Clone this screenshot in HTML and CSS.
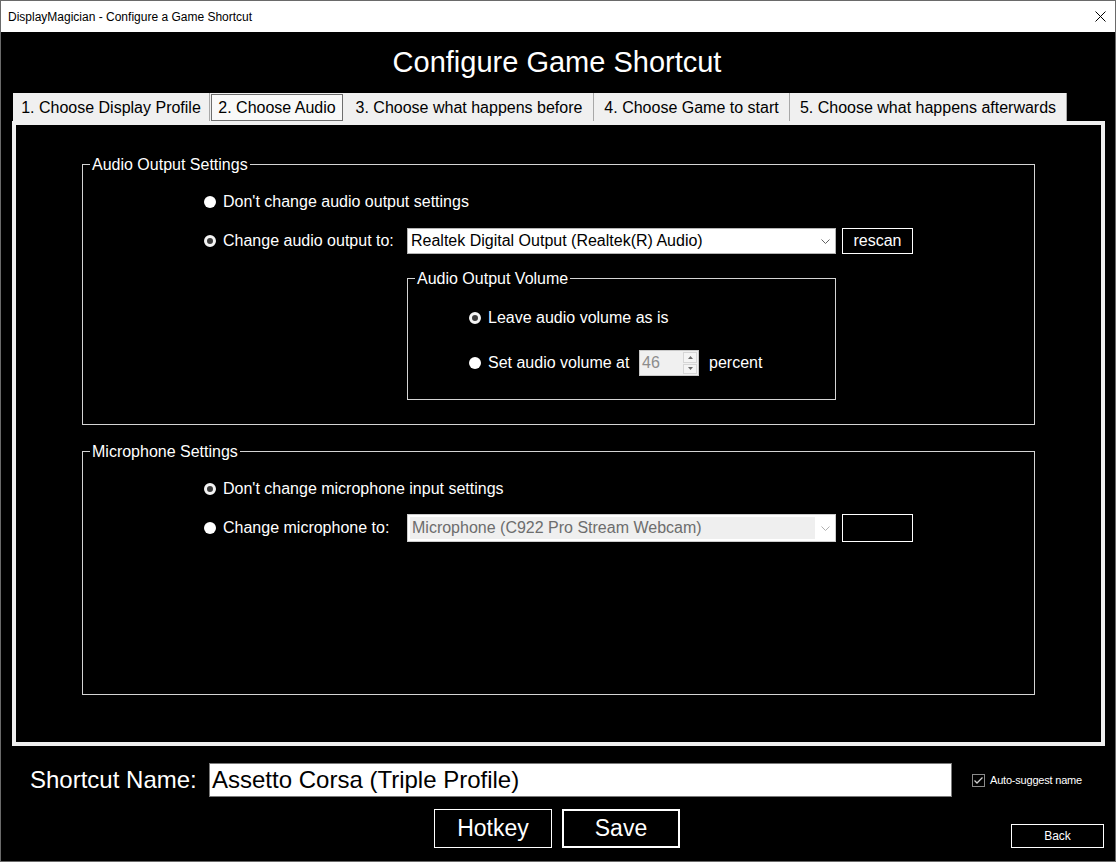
FILE: index.html
```html
<!DOCTYPE html>
<html lang="en">
<head>
<meta charset="utf-8">
<title>DisplayMagician - Configure a Game Shortcut</title>
<link rel="stylesheet" href="styles.css">
</head>
<body>
<div class="window">
  <div class="titlebar">
    <span class="title">DisplayMagician - Configure a Game Shortcut</span>
    <svg class="close" width="11" height="11" viewBox="0 0 11 11"><path d="M0.5 0.5 L10.5 10.5 M10.5 0.5 L0.5 10.5" stroke="#000" stroke-width="1" fill="none"/></svg>
  </div>
  <div class="main">
    <h1 class="heading">Configure Game Shortcut</h1>
    <div class="tabcontrol">
      <div class="tabstrip">
        <div class="tab tab-1">1. Choose Display Profile</div>
        <div class="tab tab-2 active">2. Choose Audio</div>
        <div class="tab tab-3">3. Choose what happens before</div>
        <div class="tab tab-4">4. Choose Game to start</div>
        <div class="tab tab-5">5. Choose what happens afterwards</div>
      </div>
      <div class="page">
        <div class="group group-audio">
          <span class="group-title">Audio Output Settings</span>
          <div class="row">
            <span class="radio"></span><span class="label">Don't change audio output settings</span>
          </div>
          <div class="row row-gap">
            <span class="radio checked"></span><span class="label label-fixed">Change audio output to:</span>
            <div class="combo">
              <span class="combo-text">Realtek Digital Output (Realtek(R) Audio)</span>
              <svg class="chevron" width="9" height="5" viewBox="0 0 9 5"><path d="M0.5 0.5 L4.5 4.5 L8.5 0.5" stroke="#606060" fill="none"/></svg>
            </div>
            <button class="btn btn-side">rescan</button>
          </div>
          <div class="group group-volume">
            <span class="group-title">Audio Output Volume</span>
            <div class="row">
              <span class="radio checked"></span><span class="label">Leave audio volume as is</span>
            </div>
            <div class="row row-gap-vol">
              <span class="radio"></span><span class="label label-vol">Set audio volume at</span>
              <div class="spin">
                <span class="spin-value">46</span>
                <div class="spin-arrows">
                  <span class="arrow"><svg width="5" height="3" viewBox="0 0 5 3"><path d="M0 3 L2.5 0 L5 3 Z" fill="#6a6a6a"/></svg></span>
                  <span class="arrow"><svg width="5" height="3" viewBox="0 0 5 3"><path d="M0 0 L2.5 3 L5 0 Z" fill="#6a6a6a"/></svg></span>
                </div>
              </div>
              <span class="label label-percent">percent</span>
            </div>
          </div>
        </div>

        <div class="group group-mic">
          <span class="group-title">Microphone Settings</span>
          <div class="row">
            <span class="radio checked"></span><span class="label">Don't change microphone input settings</span>
          </div>
          <div class="row row-gap-mic">
            <span class="radio"></span><span class="label label-fixed">Change microphone to:</span>
            <div class="combo combo-disabled">
              <span class="combo-field">Microphone (C922 Pro Stream Webcam)</span>
              <svg class="chevron" width="9" height="5" viewBox="0 0 9 5"><path d="M0.5 0.5 L4.5 4.5 L8.5 0.5" stroke="#b0b0b0" fill="none"/></svg>
            </div>
            <button class="btn btn-side btn-empty"></button>
          </div>
        </div>
      </div>
    </div>

    <div class="name-row">
      <span class="name-label">Shortcut Name:</span>
      <div class="name-input">Assetto Corsa (Triple Profile)</div>
      <svg class="checkbox" width="13" height="13" viewBox="0 0 13 13"><rect x="0.5" y="0.5" width="12" height="12" fill="#000" stroke="#8a8a8a"/><path d="M2.5 6.5 L5 9 L10.5 3.5" stroke="#d0d0d0" stroke-width="1.3" fill="none"/></svg>
      <span class="check-label">Auto-suggest name</span>
    </div>

    <div class="button-row">
      <div class="center-buttons">
        <button class="btn btn-big">Hotkey</button>
        <button class="btn btn-big btn-default">Save</button>
      </div>
      <button class="btn btn-back">Back</button>
    </div>
  </div>
</div>
</body>
</html>
```

FILE: styles.css
```css
html, body {
  margin: 0;
  padding: 0;
  background: #000;
}

body {
  font-family: "Liberation Sans", Arial, sans-serif;
}

.window {
  width: 1116px;
  height: 862px;
  box-sizing: border-box;
  border: 1px solid #6a6a6a;
  display: flex;
  flex-direction: column;
  background: #000;
}

.titlebar {
  height: 31px;
  background: #fff;
  display: flex;
  align-items: center;
  justify-content: space-between;
  padding-left: 7px;
  flex: none;
}

.title {
  font-size: 12px;
  color: #000;
}

.close {
  margin-right: 9px;
}

.main {
  flex: 1;
  display: flex;
  flex-direction: column;
  padding: 0 10px 13px 11px;
  color: #fff;
}

.heading {
  margin: 0;
  height: 61px;
  box-sizing: border-box;
  padding-top: 13px;
  padding-right: 3px;
  font-size: 29px;
  line-height: 34px;
  font-weight: normal;
  text-align: center;
  color: #fff;
}

/* Tabs */
.tabcontrol {
  display: flex;
  flex-direction: column;
}

.tabstrip {
  display: flex;
  height: 28px;
  width: fit-content;
  background: #f0f0f0;
  margin-left: 1px;
}

.tab {
  box-sizing: border-box;
  height: 28px;
  font-size: 16px;
  color: #000;
  display: flex;
  align-items: center;
  justify-content: center;
  border-right: 1px solid #a8a8a8;
  padding-top: 1px;
}

.tab-1 { width: 197px; }
.tab-2 { width: 135px; }
.tab-3 { width: 249px; }
.tab-4 { width: 196px; }
.tab-5 { width: 277px; }

.tab.active {
  border: 1px solid #6e6e6e;
  background: #f9f9f9;
  margin: 1px 2px 0 1px;
  width: 132px;
  height: 27px;
  padding-top: 1px;
}

.page {
  height: 625px;
  box-sizing: border-box;
  border: 4px solid #f0f0f0;
  background: #000;
  padding: 39px 66px 0 66px;
}

/* Group boxes */
.group {
  position: relative;
  border: 1px solid #d4d4d4;
  box-sizing: border-box;
}

.group-title {
  position: absolute;
  top: -9px;
  left: 7px;
  padding: 0 2px;
  background: #000;
  color: #fff;
  font-size: 16px;
  line-height: 18px;
}

.group-audio {
  padding: 25px 0 24px 121px;
}

.group-mic {
  margin-top: 26px;
  height: 244px;
  padding: 25px 0 0 121px;
}

.group-volume {
  margin-top: 24px;
  margin-left: 203px;
  width: 429px;
  height: 122px;
  padding: 27px 0 0 61px;
}

.row {
  display: flex;
  align-items: center;
  height: 24px;
}

.row-gap {
  margin-top: 14px;
  height: 26px;
}

.row-gap-vol {
  margin-top: 20px;
  height: 26px;
}

.row-gap-mic {
  margin-top: 13px;
  height: 28px;
}

.radio {
  width: 12px;
  height: 12px;
  border-radius: 50%;
  background: #fff;
  box-sizing: border-box;
  flex: none;
  margin-right: 7px;
}

.radio.checked {
  background: #3c3c3c;
  border: 3px solid #f4f4f4;
}

.label {
  font-size: 16px;
  color: #fff;
  white-space: nowrap;
}

.label-fixed {
  width: 184px;
  flex: none;
}

.label-vol {
  width: 151px;
  flex: none;
}

.label-percent {
  margin-left: 10px;
}

/* Combo boxes */
.combo {
  width: 429px;
  height: 26px;
  box-sizing: border-box;
  border: 1px solid #b4b4b4;
  background: #fff;
  display: flex;
  align-items: center;
  justify-content: space-between;
  padding: 0 5px 0 3px;
  flex: none;
}

.combo-text {
  font-size: 16px;
  color: #000;
}

.combo-disabled {
  height: 28px;
  border-color: #cccccc;
  padding: 2px 5px 2px 2px;
}

.combo-field {
  width: 405px;
  height: 100%;
  background: #efefef;
  color: #6d6d6d;
  font-size: 16px;
  display: flex;
  align-items: center;
  padding-left: 2px;
  box-sizing: border-box;
}

.chevron {
  flex: none;
}

/* Buttons */
.btn {
  font-family: "Liberation Sans", Arial, sans-serif;
  background: #000;
  color: #fff;
  border: 1px solid #fff;
  padding: 0;
  box-sizing: border-box;
  cursor: default;
}

.btn-side {
  width: 71px;
  height: 26px;
  margin-left: 6px;
  font-size: 16px;
}

.btn-empty {
  height: 28px;
}

/* Spin box */
.spin {
  width: 60px;
  height: 26px;
  box-sizing: border-box;
  border: 1px solid #c8c8c8;
  background: #f0f0f0;
  display: flex;
  flex: none;
}

.spin-value {
  flex: 1;
  font-size: 16px;
  color: #8c8c8c;
  padding-left: 2px;
  display: flex;
  align-items: center;
}

.spin-arrows {
  width: 14px;
  display: flex;
  flex-direction: column;
  margin: 1px 1px 1px 0;
  gap: 1px;
}

.arrow {
  flex: 1;
  border: 1px solid #d6d6d6;
  background: #f4f4f4;
  display: flex;
  align-items: center;
  justify-content: center;
}

/* Bottom area */
.name-row {
  margin-top: 17px;
  height: 34px;
  display: flex;
  align-items: center;
  padding-left: 18px;
}

.name-label {
  width: 179px;
  flex: none;
  font-size: 24px;
  color: #fff;
}

.name-input {
  width: 743px;
  height: 34px;
  box-sizing: border-box;
  border: 1px solid #7a7a7a;
  background: #fff;
  color: #000;
  font-size: 24px;
  display: flex;
  align-items: center;
  padding-left: 2px;
  flex: none;
}

.checkbox {
  margin-left: 20px;
  flex: none;
}

.check-label {
  margin-left: 5px;
  font-size: 11px;
  color: #fff;
  letter-spacing: -0.2px;
}

.button-row {
  margin-top: 12px;
  height: 39px;
  display: grid;
  grid-template-columns: 1fr auto 1fr;
}

.center-buttons {
  grid-column: 2;
  display: flex;
  gap: 10px;
  margin-left: -3px;
}

.btn-big {
  width: 118px;
  height: 39px;
  font-size: 23px;
}

.btn-default {
  border-width: 2px;
}

.btn-back {
  grid-column: 3;
  justify-self: end;
  align-self: end;
  width: 93px;
  height: 24px;
  font-size: 12px;
  margin-right: 1px;
}
```
